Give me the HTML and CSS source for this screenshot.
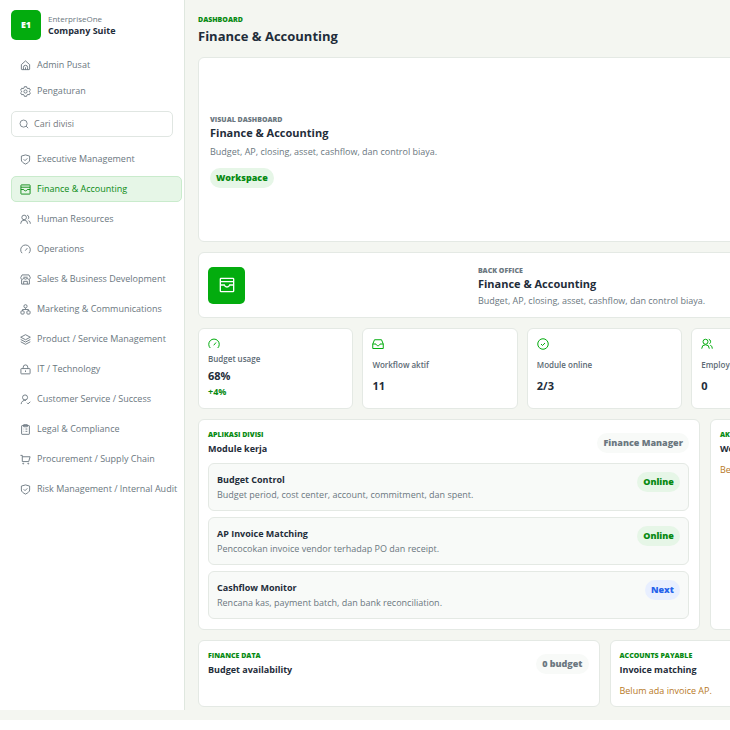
FILE: index.html
```html
<!DOCTYPE html>
<html lang="id">
<head>
    <meta charset="UTF-8">
    <meta name="viewport" content="width=device-width, initial-scale=1.0">
    <title>Finance &amp; Accounting</title>
    <link rel="stylesheet" href="styles.css">
</head>
<body>

<svg class="sprite" aria-hidden="true">
    <symbol id="i-home" viewBox="0 0 24 24"><path d="M3 20V10l9-8 9 8v10a1 1 0 0 1-1 1H4a1 1 0 0 1-1-1z"/><path d="M7.500 21v-5a4.500 4.500 0 0 1 9 0v5M12 16v5"/></symbol>
    <symbol id="i-gear" viewBox="0 0 24 24"><path d="M9.500 1.500h5l.7 3 2 1.200 3-.9 2.500 4.300-2.300 2.100v1.600l2.300 2.100-2.500 4.300-3-.9-2 1.200-.7 3h-5l-.7-3-2-1.200-3 .9-2.500-4.300 2.300-2.100v-1.600L1.300 9.100l2.500-4.300 3 .9 2-1.200z"/><circle cx="12" cy="12" r="3.500"/></symbol>
    <symbol id="i-search" viewBox="0 0 24 24"><circle cx="11" cy="11" r="8.500"/><path d="M17 17l5 5"/></symbol>
    <symbol id="i-shield" viewBox="0 0 24 24"><path d="M12 2l9 2.500V13c0 4-4 6.500-9 9-5-2.500-9-5-9-9V4.500z"/><path d="M8 11.500l3 3 5-5"/></symbol>
    <symbol id="i-archive" viewBox="0 0 24 24"><rect x="2" y="2" width="20" height="20" rx="1"/><path d="M2 7h20M2 12h6c.6 1.800 2 3 4 3s3.400-1.200 4-3h6"/></symbol>
    <symbol id="i-users" viewBox="0 0 24 24"><circle cx="9" cy="7.500" r="5"/><path d="M1.500 21.500V21a7.500 7.500 0 0 1 15 0v.5M15.500 2.500a5 5 0 0 1 1.500 9M18.500 14.500a6 6 0 0 1 4 6v1"/></symbol>
    <symbol id="i-gauge" viewBox="0 0 24 24"><path d="M4.500 20a10.500 10.500 0 1 1 15 0M11.500 14.500l4.500-5.500"/></symbol>
    <symbol id="i-store" viewBox="0 0 24 24"><path d="M4.500 2h15L22.500 8c0 2-1.500 3.500-3.500 3.500S15.500 10 15.500 8.500c0 1.500-1.500 3-3.500 3s-3.500-1.500-3.500-3c0 1.500-1.500 3-3.500 3S1.500 10 1.500 8zM3.500 12v10h17V12M8 22v-6h8v6M7.500 7h9"/></symbol>
    <symbol id="i-org" viewBox="0 0 24 24"><circle cx="12" cy="5" r="3.500"/><rect x="2" y="15" width="7" height="7" rx="2"/><rect x="15" y="15" width="7" height="7" rx="2"/><path d="M12 9v3M5.500 15v-3h13v3"/></symbol>
    <symbol id="i-stack" viewBox="0 0 24 24"><path d="M12 1.500l10.500 5.500-10.500 5.500L1.500 7zM1.500 12L12 17.500 22.500 12M1.500 17L12 22.500 22.500 17"/></symbol>
    <symbol id="i-lock" viewBox="0 0 24 24"><rect x="2" y="10" width="20" height="11.500" rx="1"/><path d="M7 10V7a5 5 0 0 1 10 0v3M12 14v3.500"/></symbol>
    <symbol id="i-usercheck" viewBox="0 0 24 24"><circle cx="11" cy="7.500" r="5.500"/><path d="M2.500 22a8.500 8.500 0 0 1 10.500-8M15 19l2.500 2.500L22.500 17"/></symbol>
    <symbol id="i-clipboard" viewBox="0 0 24 24"><rect x="3.500" y="3.500" width="17" height="19" rx="1"/><path d="M8 1.500h8V6H8zM8 11h1M12 11h4M8 16h1M12 16h4"/></symbol>
    <symbol id="i-cart" viewBox="0 0 24 24"><path d="M1 3h4v13.500h14L22 6H5"/><circle cx="7" cy="21" r="1"/><circle cx="18" cy="21" r="1"/></symbol>
    <symbol id="i-inbox" viewBox="0 0 24 24"><path d="M5 3.500h14l3.500 8.500v9h-21v-9zM1.500 12H8c.6 2 2 3.500 4 3.500s3.400-1.500 4-3.500h6.500"/></symbol>
    <symbol id="i-check" viewBox="0 0 24 24"><circle cx="12" cy="12" r="10.500"/><path d="M8 12l3 3 5-5"/></symbol>
</svg>

<div class="app">
    <aside class="sidebar">
        <div class="brand">
            <div class="brand-logo">E1</div>
            <div>
                <div class="brand-name">EnterpriseOne</div>
                <div class="brand-title">Company Suite</div>
            </div>
        </div>

        <nav class="nav-top">
            <a class="nav-item" href="#"><svg class="icon"><use href="#i-home"/></svg>Admin Pusat</a>
            <a class="nav-item" href="#"><svg class="icon"><use href="#i-gear"/></svg>Pengaturan</a>
        </nav>

        <label class="search">
            <svg class="icon"><use href="#i-search"/></svg>
            <input type="text" placeholder="Cari divisi" aria-label="Cari divisi">
        </label>

        <nav class="nav-list">
            <a class="nav-item" href="#"><svg class="icon"><use href="#i-shield"/></svg>Executive Management</a>
            <a class="nav-item active" href="#"><svg class="icon"><use href="#i-archive"/></svg>Finance &amp; Accounting</a>
            <a class="nav-item" href="#"><svg class="icon"><use href="#i-users"/></svg>Human Resources</a>
            <a class="nav-item" href="#"><svg class="icon"><use href="#i-gauge"/></svg>Operations</a>
            <a class="nav-item" href="#"><svg class="icon"><use href="#i-store"/></svg>Sales &amp; Business Development</a>
            <a class="nav-item" href="#"><svg class="icon"><use href="#i-org"/></svg>Marketing &amp; Communications</a>
            <a class="nav-item" href="#"><svg class="icon"><use href="#i-stack"/></svg>Product / Service Management</a>
            <a class="nav-item" href="#"><svg class="icon"><use href="#i-lock"/></svg>IT / Technology</a>
            <a class="nav-item" href="#"><svg class="icon"><use href="#i-usercheck"/></svg>Customer Service / Success</a>
            <a class="nav-item" href="#"><svg class="icon"><use href="#i-clipboard"/></svg>Legal &amp; Compliance</a>
            <a class="nav-item" href="#"><svg class="icon"><use href="#i-cart"/></svg>Procurement / Supply Chain</a>
            <a class="nav-item" href="#"><svg class="icon"><use href="#i-shield"/></svg>Risk Management / Internal Audit</a>
        </nav>
    </aside>

    <main class="main">
        <header class="page-head">
            <div class="eyebrow">DASHBOARD</div>
            <h1>Finance &amp; Accounting</h1>
        </header>

        <section class="card hero">
            <div class="eyebrow muted">VISUAL DASHBOARD</div>
            <h2>Finance &amp; Accounting</h2>
            <p class="desc">Budget, AP, closing, asset, cashflow, dan control biaya.</p>
            <span class="pill green">Workspace</span>
        </section>

        <section class="card office">
            <div class="office-icon"><svg class="icon"><use href="#i-archive"/></svg></div>
            <div class="office-text">
                <div class="eyebrow muted">BACK OFFICE</div>
                <h2>Finance &amp; Accounting</h2>
                <p class="desc">Budget, AP, closing, asset, cashflow, dan control biaya.</p>
            </div>
            <div class="office-end"></div>
        </section>

        <section class="stats">
            <div class="card stat">
                <svg class="icon"><use href="#i-gauge"/></svg>
                <span class="stat-label">Budget usage</span>
                <strong>68%</strong>
                <em>+4%</em>
            </div>
            <div class="card stat">
                <svg class="icon"><use href="#i-inbox"/></svg>
                <span class="stat-label">Workflow aktif</span>
                <strong>11</strong>
            </div>
            <div class="card stat">
                <svg class="icon"><use href="#i-check"/></svg>
                <span class="stat-label">Module online</span>
                <strong>2/3</strong>
            </div>
            <div class="card stat">
                <svg class="icon"><use href="#i-users"/></svg>
                <span class="stat-label">Employee</span>
                <strong>0</strong>
            </div>
        </section>

        <section class="panels">
            <div class="card panel">
                <div class="panel-head">
                    <div>
                        <div class="eyebrow">APLIKASI DIVISI</div>
                        <h3>Module kerja</h3>
                    </div>
                    <span class="pill gray">Finance Manager</span>
                </div>
                <div class="modules">
                    <div class="module">
                        <div>
                            <h3>Budget Control</h3>
                            <p class="desc">Budget period, cost center, account, commitment, dan spent.</p>
                        </div>
                        <span class="pill green">Online</span>
                    </div>
                    <div class="module">
                        <div>
                            <h3>AP Invoice Matching</h3>
                            <p class="desc">Pencocokan invoice vendor terhadap PO dan receipt.</p>
                        </div>
                        <span class="pill green">Online</span>
                    </div>
                    <div class="module">
                        <div>
                            <h3>Cashflow Monitor</h3>
                            <p class="desc">Rencana kas, payment batch, dan bank reconciliation.</p>
                        </div>
                        <span class="pill blue">Next</span>
                    </div>
                </div>
            </div>
            <div class="card panel">
                <div class="panel-head">
                    <div>
                        <div class="eyebrow">AKTIF</div>
                        <h3>Workflow</h3>
                    </div>
                </div>
                <p class="empty">Belum ada</p>
            </div>
        </section>

        <section class="data">
            <div class="card panel">
                <div class="panel-head">
                    <div>
                        <div class="eyebrow">FINANCE DATA</div>
                        <h3>Budget availability</h3>
                    </div>
                    <span class="pill gray">0 budget</span>
                </div>
            </div>
            <div class="card panel">
                <div class="panel-head">
                    <div>
                        <div class="eyebrow">ACCOUNTS PAYABLE</div>
                        <h3>Invoice matching</h3>
                    </div>
                </div>
                <p class="empty">Belum ada invoice AP.</p>
            </div>
        </section>
    </main>
</div>

</body>
</html>
```
FILE: styles.css
```css
* {
    box-sizing: border-box;
}
body {
    margin: 0;
    background: #fff;
    color: #1f2d3a;
    font-family: "Open Sans", "Noto Sans", sans-serif;
    font-size: 9px;
    line-height: 14px;
    overflow: hidden;
}
h1, h2, h3, p {
    margin: 0;
}
.sprite {
    display: none;
}
.icon {
    width: 12px;
    height: 12px;
    flex: none;
    fill: none;
    stroke: currentColor;
    stroke-width: 2;
}
.app {
    display: flex;
    align-items: flex-start;
    background: #f4f6f1;
}

/* sidebar */
.sidebar {
    flex: none;
    width: 185px;
    min-height: 710px;
    padding: 10px 2px 10px 11px;
    background: #fff;
    border-right: 1px solid #dfe7df;
}
.brand {
    display: flex;
    align-items: center;
    gap: 7px;
}
.brand-logo {
    display: flex;
    align-items: center;
    justify-content: center;
    width: 30px;
    height: 30px;
    border-radius: 5px;
    background: #03ac0e;
    color: #fff;
    font-weight: 800;
}
.brand-name {
    color: #6b7780;
    font-size: 8px;
    line-height: 12px;
}
.brand-title {
    font-weight: 700;
    line-height: 12px;
}
.nav-top {
    margin-top: 12px;
}
.nav-item {
    display: flex;
    align-items: center;
    gap: 6px;
    height: 26px;
    padding: 0 8px;
    border: 1px solid transparent;
    border-radius: 5px;
    color: #6b7780;
    text-decoration: none;
    white-space: nowrap;
}
.nav-item .icon {
    width: 11px;
    height: 11px;
}
.nav-item.active {
    background: #e6f6e7;
    border-color: #c9ebcc;
    color: #0b8a14;
}
.search {
    display: flex;
    align-items: center;
    gap: 5px;
    height: 26px;
    margin: 7px 9px 9px 0;
    padding: 0 7px;
    border: 1px solid #e0e6e2;
    border-radius: 5px;
    color: #6b7780;
}
.search .icon {
    width: 10px;
    height: 10px;
}
.search input {
    width: 100%;
    padding: 0;
    border: 0;
    outline: 0;
    background: none;
    font: inherit;
}
.search input::placeholder {
    color: #75797d;
}
.nav-list {
    display: grid;
    grid-template-columns: minmax(0, 1fr);
    gap: 4px;
}

/* content */
.main {
    flex: 1 0 auto;
    width: 839px;
    display: grid;
    gap: 10px;
    padding: 14px 13px 13px;
}
.eyebrow {
    color: #078a12;
    font-size: 7px;
    font-weight: 800;
    line-height: 12px;
}
.eyebrow.muted {
    color: #6b7780;
}
h1 {
    font-size: 13px;
    line-height: 21px;
}
h2 {
    font-size: 11px;
    line-height: 14px;
}
h3 {
    font-size: 9px;
    line-height: 16px;
}
.desc {
    color: #6b7780;
}
.card {
    background: #fff;
    border: 1px solid #e4e9e4;
    border-radius: 6px;
}
.pill {
    flex: none;
    padding: 0 6px;
    border-radius: 10px;
    font-size: 9px;
    font-weight: 800;
    line-height: 20px;
}
.pill.green {
    background: #e6f6e7;
    color: #078a12;
}
.pill.gray {
    background: #f8faf8;
    color: #6b7780;
}
.pill.blue {
    background: #e8efff;
    color: #2563eb;
}
.hero {
    display: flex;
    flex-direction: column;
    align-items: flex-start;
    justify-content: center;
    min-height: 185px;
    padding: 14px 11px 11px;
}
.hero .desc {
    margin: 5px 0 9px;
}
.office {
    display: flex;
    align-items: center;
    justify-content: space-between;
    min-height: 66px;
    padding: 9px;
}
.office-icon {
    display: flex;
    align-items: center;
    justify-content: center;
    width: 37px;
    height: 37px;
    border-radius: 5px;
    background: #03ac0e;
    color: #fff;
}
.office-icon .icon {
    width: 16px;
    height: 16px;
}
.office-text {
    padding-top: 3px;
}
.office .desc {
    margin-top: 3px;
}
.office-end {
    width: 63px;
}
.stats {
    display: grid;
    grid-template-columns: repeat(5, 1fr);
    gap: 9px;
}
.stat {
    display: grid;
    gap: 2px;
    min-height: 81px;
    padding: 9px;
}
.stat .icon {
    color: #03ac0e;
}
.stat-label {
    color: #5c6a74;
    font-size: 8px;
    font-weight: 600;
}
.stat strong {
    font-size: 11px;
}
.stat em {
    color: #078a12;
    font-style: normal;
    font-weight: 700;
}
.panels {
    display: grid;
    grid-template-columns: 5fr 3fr;
    gap: 10px;
}
.panel {
    padding: 9px 10px 10px 9px;
}
.panel-head {
    display: flex;
    align-items: center;
    justify-content: space-between;
    margin-bottom: 6px;
}
.modules {
    display: grid;
    gap: 6px;
}
.module {
    display: flex;
    align-items: flex-start;
    justify-content: space-between;
    min-height: 48px;
    padding: 8px;
    background: #f8faf8;
    border: 1px solid #e4e9e4;
    border-radius: 6px;
}
.empty {
    color: #b7791f;
}
.data {
    display: grid;
    grid-template-columns: 1fr 1fr;
    gap: 10px;
}
.data .panel {
    padding-bottom: 8px;
}
```
